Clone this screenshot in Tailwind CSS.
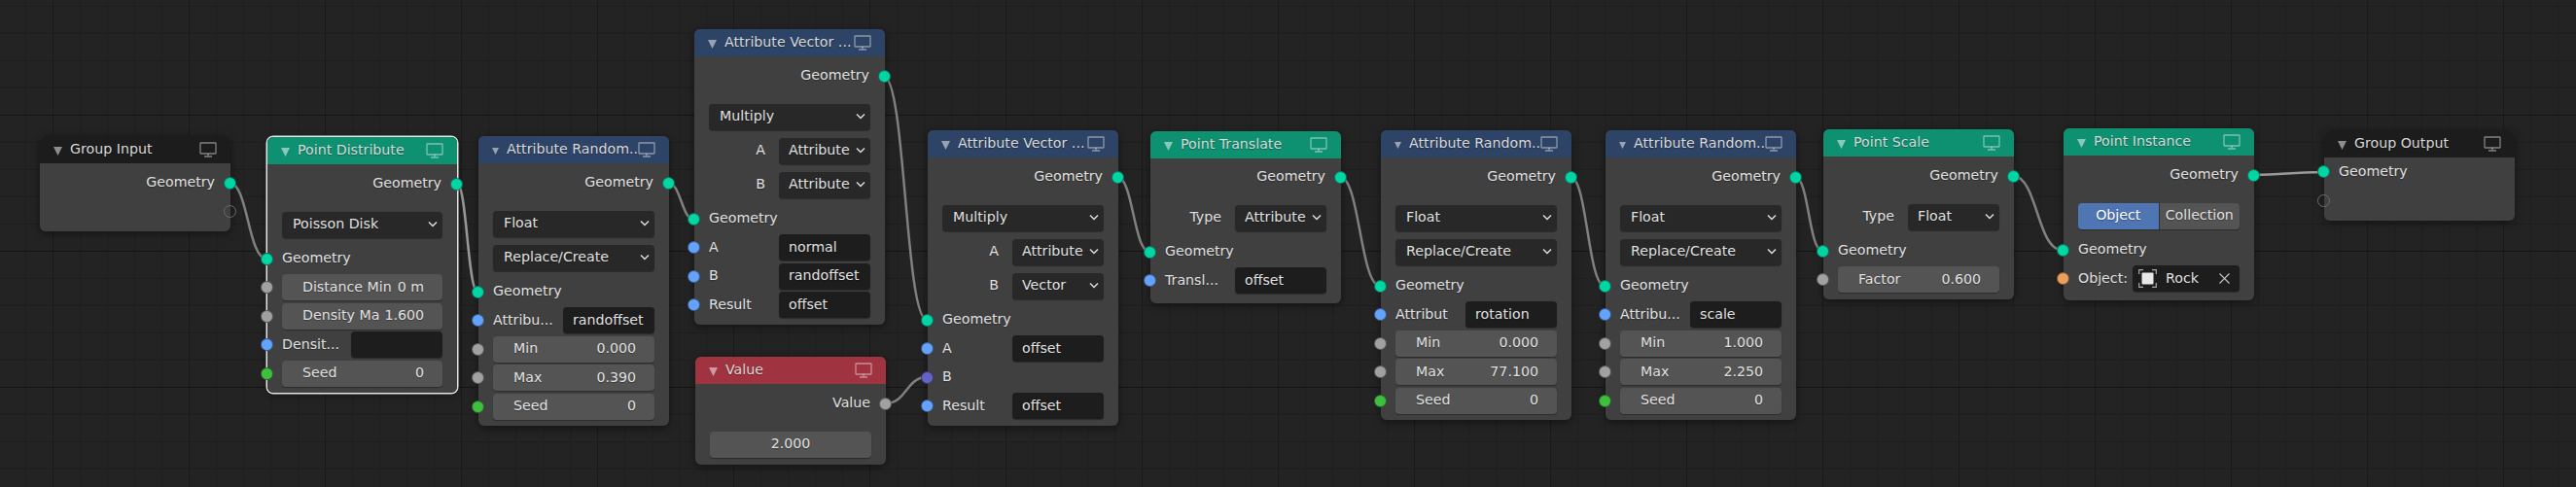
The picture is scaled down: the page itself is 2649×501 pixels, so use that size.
<!DOCTYPE html>
<html lang="en">
<head>
<meta charset="UTF-8">
<title>Geometry Nodes</title>
<script src="https://cdn.jsdelivr.net/npm/@tailwindcss/browser@4"></script>
</head>
<body class="bg-[#232323]">

<!-- Editor canvas with the two-level grid -->
<div class="relative h-[501px] w-[2649px] overflow-hidden bg-[#232323] bg-[linear-gradient(#151515_1px,transparent_1px),linear-gradient(90deg,#1a1a1a_1px,transparent_1px),linear-gradient(#1e1e1e_1px,transparent_1px),linear-gradient(90deg,#1e1e1e_1px,transparent_1px)] bg-[size:140px_140px,140px_140px,28px_28px,28px_28px] bg-[position:0_118px,54px_0,0_6px,26px_0] font-['DejaVu_Sans',sans-serif] text-[14.2px] text-[#e0e0e0] [text-shadow:0_1px_1px_#0005]">

  <!-- Wires -->
  <svg class="absolute inset-0" width="2649" height="501" fill="none" stroke="#808080" stroke-width="2.5">
    <path d="M236 188 C255 188 255 266 274 266"/>
    <path d="M470 189 C480 189 481 300 491 300" stroke="#999"/>
    <path d="M687 188 C700 188 701 226 714 226"/>
    <path d="M909 79 C931 79 931 329 953 329"/>
    <path d="M911 415 C932 415 932 388 953 388"/>
    <path d="M1149 182 C1165 182 1166 259 1182 259"/>
    <path d="M1378 182 C1398 182 1399 294 1419 294"/>
    <path d="M1615 182 C1632 182 1633 294 1650 294"/>
    <path d="M1846 182 C1860 182 1860 258 1874 258"/>
    <path d="M2070 181 C2095 181 2095 257 2120 257"/>
    <path d="M2316 180 C2352 180 2352 177 2389 177" stroke="#999"/>
  </svg>

  <!-- Group Input -->
  <div class="absolute left-[41px] top-[140px] w-[196px] rounded-[6px] bg-[#424242]/95 pb-[7px] shadow-[0_2px_8px_#0007]">
    <div class="flex h-[28px] items-center rounded-t-[6px] bg-[#1a1a1a]/95">
      <svg class="ml-[14px] mt-[3px] size-[9px] fill-white/50" viewBox="0 0 9 9"><polygon points="0,0 9,0 4.5,9"/></svg>
      <span class="ml-[8px] flex-1 whitespace-nowrap text-[#d8d8d8]">Group Input</span>
      <svg class="mr-[14px] h-[16px] w-[18px] shrink-0 stroke-white/45" viewBox="0 0 18 16" fill="none" stroke-width="1.3"><rect x="1" y="1" width="16" height="11" rx="0.5"/><path d="M9 12v3M5 15h8"/></svg>
    </div>
    <div class="mt-[6.5px] flex flex-col gap-[2.5px]">
      <div class="relative flex h-[27px] items-center justify-end px-[15px]"><span class="pr-[1px]">Geometry</span><i class="absolute -right-[5.5px] top-[7px] size-[13px] rounded-full border border-[#1a1a1a]/50 bg-[#00d6a3]"></i></div>
      <div class="relative h-[27px]"><i class="absolute -right-[5.5px] top-[7px] size-[13px] rounded-full border border-[#6a6a6a]"></i></div>
    </div>
  </div>

  <!-- Point Distribute (selected) -->
  <div class="absolute left-[275px] top-[141px] w-[195px] rounded-[6px] bg-[#424242]/95 shadow-[0_2px_8px_#0007] ring-[1.5px] ring-[#e4e4e4]">
    <div class="flex h-[28px] items-center rounded-t-[6px] bg-[#0e9170]">
      <svg class="ml-[14px] mt-[3px] size-[9px] fill-white/50" viewBox="0 0 9 9"><polygon points="0,0 9,0 4.5,9"/></svg>
      <span class="ml-[8px] flex-1 whitespace-nowrap text-[#d8d8d8]">Point Distribute</span>
      <svg class="mr-[14px] h-[16px] w-[18px] shrink-0 stroke-white/45" viewBox="0 0 18 16" fill="none" stroke-width="1.3"><rect x="1" y="1" width="16" height="11" rx="0.5"/><path d="M9 12v3M5 15h8"/></svg>
    </div>
    <div class="mt-[6.5px] flex flex-col gap-[2.5px] pb-[6.5px]">
      <div class="relative flex h-[27px] items-center justify-end px-[15px]"><span class="pr-[1px]">Geometry</span><i class="absolute -right-[5.5px] top-[7px] size-[13px] rounded-full border border-[#1a1a1a]/50 bg-[#00d6a3]"></i></div>
      <div class="relative mt-[12.5px] flex h-[27px] items-center px-[15px]"><div class="flex h-full flex-1 items-center justify-between rounded-[4px] bg-[#282828] pl-[11px] pr-[5px] shadow-[0_1px_1px_#0005]">Poisson Disk<svg class="h-[8px] w-[10px]" viewBox="0 0 10 8" fill="none" stroke="#ddd" stroke-width="1.5"><path d="M1 1.5l4 4 4-4"/></svg></div></div>
      <div class="relative mt-[5.5px] flex h-[27px] items-center px-[15px]">Geometry<i class="absolute -left-[7.5px] top-[7px] size-[13px] rounded-full border border-[#1a1a1a]/50 bg-[#00d6a3]"></i></div>
      <div class="relative flex h-[27px] items-center px-[15px]"><div class="flex h-full flex-1 items-center justify-between rounded-[4px] bg-[#545454] pl-[21px] pr-[19px] shadow-[0_1px_1px_#0005]"><span>Distance Min</span><span>0 m</span></div><i class="absolute -left-[7.5px] top-[7px] size-[13px] rounded-full border border-[#1a1a1a]/50 bg-[#a1a1a1]"></i></div>
      <div class="relative flex h-[27px] items-center px-[15px]"><div class="flex h-full flex-1 items-center justify-between rounded-[4px] bg-[#545454] pl-[21px] pr-[19px] shadow-[0_1px_1px_#0005]"><span>Density Ma</span><span>1.600</span></div><i class="absolute -left-[7.5px] top-[7px] size-[13px] rounded-full border border-[#1a1a1a]/50 bg-[#a1a1a1]"></i></div>
      <div class="relative flex h-[27px] items-center px-[15px]"><span class="flex-1">Densit...</span><div class="h-full w-[94px] rounded-[4px] bg-[#1d1d1d] shadow-[0_1px_1px_#0005]"></div><i class="absolute -left-[7.5px] top-[7px] size-[13px] rounded-full border border-[#1a1a1a]/50 bg-[#63a2ff]"></i></div>
      <div class="relative flex h-[27px] items-center px-[15px]"><div class="flex h-full flex-1 items-center justify-between rounded-[4px] bg-[#545454] pl-[21px] pr-[19px] shadow-[0_1px_1px_#0005]"><span>Seed</span><span>0</span></div><i class="absolute -left-[7.5px] top-[7px] size-[13px] rounded-full border border-[#1a1a1a]/50 bg-[#3fbf3f]"></i></div>
    </div>
  </div>

  <!-- Attribute Randomize: randoffset -->
  <div class="absolute left-[492px] top-[140px] w-[196px] rounded-[6px] bg-[#424242]/95 shadow-[0_2px_8px_#0007]">
    <div class="flex h-[28px] items-center rounded-t-[6px] bg-[#2e4467]">
      <svg class="ml-[14px] mt-[3px] size-[9px] fill-white/50" viewBox="0 0 9 9"><polygon points="0,0 9,0 4.5,9"/></svg>
      <span class="ml-[8px] flex-1 whitespace-nowrap text-[#d8d8d8]">Attribute Random..</span>
      <svg class="mr-[14px] h-[16px] w-[18px] shrink-0 stroke-white/45" viewBox="0 0 18 16" fill="none" stroke-width="1.3"><rect x="1" y="1" width="16" height="11" rx="0.5"/><path d="M9 12v3M5 15h8"/></svg>
    </div>
    <div class="mt-[6.5px] flex flex-col gap-[2.5px] pb-[6.5px]">
      <div class="relative flex h-[27px] items-center justify-end px-[15px]"><span class="pr-[1px]">Geometry</span><i class="absolute -right-[5.5px] top-[7px] size-[13px] rounded-full border border-[#1a1a1a]/50 bg-[#00d6a3]"></i></div>
      <div class="relative mt-[12.5px] flex h-[27px] items-center px-[15px]"><div class="flex h-full flex-1 items-center justify-between rounded-[4px] bg-[#282828] pl-[11px] pr-[5px] shadow-[0_1px_1px_#0005]">Float<svg class="h-[8px] w-[10px]" viewBox="0 0 10 8" fill="none" stroke="#ddd" stroke-width="1.5"><path d="M1 1.5l4 4 4-4"/></svg></div></div>
      <div class="relative mt-[5.5px] flex h-[27px] items-center px-[15px]"><div class="flex h-full flex-1 items-center justify-between rounded-[4px] bg-[#282828] pl-[11px] pr-[5px] shadow-[0_1px_1px_#0005]">Replace/Create<svg class="h-[8px] w-[10px]" viewBox="0 0 10 8" fill="none" stroke="#ddd" stroke-width="1.5"><path d="M1 1.5l4 4 4-4"/></svg></div></div>
      <div class="relative mt-[5.5px] flex h-[27px] items-center px-[15px]">Geometry<i class="absolute -left-[7.5px] top-[7px] size-[13px] rounded-full border border-[#1a1a1a]/50 bg-[#00d6a3]"></i></div>
      <div class="relative flex h-[27px] items-center px-[15px]"><span class="flex-1">Attribu...</span><div class="flex h-full w-[94px] items-center rounded-[4px] bg-[#1d1d1d] pl-[10px] shadow-[0_1px_1px_#0005]">randoffset</div><i class="absolute -left-[7.5px] top-[7px] size-[13px] rounded-full border border-[#1a1a1a]/50 bg-[#63a2ff]"></i></div>
      <div class="relative flex h-[27px] items-center px-[15px]"><div class="flex h-full flex-1 items-center justify-between rounded-[4px] bg-[#545454] pl-[21px] pr-[19px] shadow-[0_1px_1px_#0005]"><span>Min</span><span>0.000</span></div><i class="absolute -left-[7.5px] top-[7px] size-[13px] rounded-full border border-[#1a1a1a]/50 bg-[#a1a1a1]"></i></div>
      <div class="relative flex h-[27px] items-center px-[15px]"><div class="flex h-full flex-1 items-center justify-between rounded-[4px] bg-[#545454] pl-[21px] pr-[19px] shadow-[0_1px_1px_#0005]"><span>Max</span><span>0.390</span></div><i class="absolute -left-[7.5px] top-[7px] size-[13px] rounded-full border border-[#1a1a1a]/50 bg-[#a1a1a1]"></i></div>
      <div class="relative flex h-[27px] items-center px-[15px]"><div class="flex h-full flex-1 items-center justify-between rounded-[4px] bg-[#545454] pl-[21px] pr-[19px] shadow-[0_1px_1px_#0005]"><span>Seed</span><span>0</span></div><i class="absolute -left-[7.5px] top-[7px] size-[13px] rounded-full border border-[#1a1a1a]/50 bg-[#3fbf3f]"></i></div>
    </div>
  </div>

  <!-- Attribute Vector Math: normal x randoffset -->
  <div class="absolute left-[714px] top-[30px] w-[196px] rounded-[6px] bg-[#424242]/95 shadow-[0_2px_8px_#0007]">
    <div class="flex h-[28px] items-center rounded-t-[6px] bg-[#2e4467]">
      <svg class="ml-[14px] mt-[3px] size-[9px] fill-white/50" viewBox="0 0 9 9"><polygon points="0,0 9,0 4.5,9"/></svg>
      <span class="ml-[8px] flex-1 whitespace-nowrap text-[#d8d8d8]">Attribute Vector ...</span>
      <svg class="mr-[14px] h-[16px] w-[18px] shrink-0 stroke-white/45" viewBox="0 0 18 16" fill="none" stroke-width="1.3"><rect x="1" y="1" width="16" height="11" rx="0.5"/><path d="M9 12v3M5 15h8"/></svg>
    </div>
    <div class="mt-[6.5px] flex flex-col gap-[2.5px] pb-[6.5px]">
      <div class="relative flex h-[27px] items-center justify-end px-[15px]"><span class="pr-[1px]">Geometry</span><i class="absolute -right-[5.5px] top-[7px] size-[13px] rounded-full border border-[#1a1a1a]/50 bg-[#00d6a3]"></i></div>
      <div class="relative mt-[12.5px] flex h-[27px] items-center px-[15px]"><div class="flex h-full flex-1 items-center justify-between rounded-[4px] bg-[#282828] pl-[11px] pr-[5px] shadow-[0_1px_1px_#0005]">Multiply<svg class="h-[8px] w-[10px]" viewBox="0 0 10 8" fill="none" stroke="#ddd" stroke-width="1.5"><path d="M1 1.5l4 4 4-4"/></svg></div></div>
      <div class="relative mt-[5.5px] flex h-[27px] items-center px-[15px]"><span class="flex-1 pr-[14px] text-right">A</span><div class="flex h-full w-[94px] items-center justify-between rounded-[4px] bg-[#282828] pl-[10px] pr-[5px] shadow-[0_1px_1px_#0005]">Attribute<svg class="h-[8px] w-[10px]" viewBox="0 0 10 8" fill="none" stroke="#ddd" stroke-width="1.5"><path d="M1 1.5l4 4 4-4"/></svg></div></div>
      <div class="relative mt-[5.5px] flex h-[27px] items-center px-[15px]"><span class="flex-1 pr-[14px] text-right">B</span><div class="flex h-full w-[94px] items-center justify-between rounded-[4px] bg-[#282828] pl-[10px] pr-[5px] shadow-[0_1px_1px_#0005]">Attribute<svg class="h-[8px] w-[10px]" viewBox="0 0 10 8" fill="none" stroke="#ddd" stroke-width="1.5"><path d="M1 1.5l4 4 4-4"/></svg></div></div>
      <div class="relative mt-[5.5px] flex h-[27px] items-center px-[15px]">Geometry<i class="absolute -left-[7.5px] top-[7px] size-[13px] rounded-full border border-[#1a1a1a]/50 bg-[#00d6a3]"></i></div>
      <div class="relative flex h-[27px] items-center px-[15px]"><span class="flex-1">A</span><div class="flex h-full w-[94px] items-center rounded-[4px] bg-[#1d1d1d] pl-[10px] shadow-[0_1px_1px_#0005]">normal</div><i class="absolute -left-[7.5px] top-[7px] size-[13px] rounded-full border border-[#1a1a1a]/50 bg-[#63a2ff]"></i></div>
      <div class="relative flex h-[27px] items-center px-[15px]"><span class="flex-1">B</span><div class="flex h-full w-[94px] items-center rounded-[4px] bg-[#1d1d1d] pl-[10px] shadow-[0_1px_1px_#0005]">randoffset</div><i class="absolute -left-[7.5px] top-[7px] size-[13px] rounded-full border border-[#1a1a1a]/50 bg-[#63a2ff]"></i></div>
      <div class="relative flex h-[27px] items-center px-[15px]"><span class="flex-1">Result</span><div class="flex h-full w-[94px] items-center rounded-[4px] bg-[#1d1d1d] pl-[10px] shadow-[0_1px_1px_#0005]">offset</div><i class="absolute -left-[7.5px] top-[7px] size-[13px] rounded-full border border-[#1a1a1a]/50 bg-[#63a2ff]"></i></div>
    </div>
  </div>

  <!-- Value -->
  <div class="absolute left-[715px] top-[367px] w-[196px] rounded-[6px] bg-[#424242]/95 shadow-[0_2px_8px_#0007]">
    <div class="flex h-[28px] items-center rounded-t-[6px] bg-[#9f3340]">
      <svg class="ml-[14px] mt-[3px] size-[9px] fill-white/50" viewBox="0 0 9 9"><polygon points="0,0 9,0 4.5,9"/></svg>
      <span class="ml-[8px] flex-1 whitespace-nowrap text-[#d8d8d8]">Value</span>
      <svg class="mr-[14px] h-[16px] w-[18px] shrink-0 stroke-white/45" viewBox="0 0 18 16" fill="none" stroke-width="1.3"><rect x="1" y="1" width="16" height="11" rx="0.5"/><path d="M9 12v3M5 15h8"/></svg>
    </div>
    <div class="mt-[6.5px] flex flex-col gap-[2.5px] pb-[7.5px]">
      <div class="relative flex h-[27px] items-center justify-end px-[15px]"><span class="pr-[1px]">Value</span><i class="absolute -right-[5.5px] top-[7px] size-[13px] rounded-full border border-[#1a1a1a]/50 bg-[#a1a1a1]"></i></div>
      <div class="relative mt-[12.5px] flex h-[27px] items-center px-[15px]"><div class="flex h-full flex-1 items-center justify-center rounded-[4px] bg-[#545454] shadow-[0_1px_1px_#0005]">2.000</div></div>
    </div>
  </div>

  <!-- Attribute Vector Math: offset x value -->
  <div class="absolute left-[954px] top-[134px] w-[196px] rounded-[6px] bg-[#424242]/95 shadow-[0_2px_8px_#0007]">
    <div class="flex h-[28px] items-center rounded-t-[6px] bg-[#2e4467]">
      <svg class="ml-[14px] mt-[3px] size-[9px] fill-white/50" viewBox="0 0 9 9"><polygon points="0,0 9,0 4.5,9"/></svg>
      <span class="ml-[8px] flex-1 whitespace-nowrap text-[#d8d8d8]">Attribute Vector ...</span>
      <svg class="mr-[14px] h-[16px] w-[18px] shrink-0 stroke-white/45" viewBox="0 0 18 16" fill="none" stroke-width="1.3"><rect x="1" y="1" width="16" height="11" rx="0.5"/><path d="M9 12v3M5 15h8"/></svg>
    </div>
    <div class="mt-[6.5px] flex flex-col gap-[2.5px] pb-[6.5px]">
      <div class="relative flex h-[27px] items-center justify-end px-[15px]"><span class="pr-[1px]">Geometry</span><i class="absolute -right-[5.5px] top-[7px] size-[13px] rounded-full border border-[#1a1a1a]/50 bg-[#00d6a3]"></i></div>
      <div class="relative mt-[12.5px] flex h-[27px] items-center px-[15px]"><div class="flex h-full flex-1 items-center justify-between rounded-[4px] bg-[#282828] pl-[11px] pr-[5px] shadow-[0_1px_1px_#0005]">Multiply<svg class="h-[8px] w-[10px]" viewBox="0 0 10 8" fill="none" stroke="#ddd" stroke-width="1.5"><path d="M1 1.5l4 4 4-4"/></svg></div></div>
      <div class="relative mt-[5.5px] flex h-[27px] items-center px-[15px]"><span class="flex-1 pr-[14px] text-right">A</span><div class="flex h-full w-[94px] items-center justify-between rounded-[4px] bg-[#282828] pl-[10px] pr-[5px] shadow-[0_1px_1px_#0005]">Attribute<svg class="h-[8px] w-[10px]" viewBox="0 0 10 8" fill="none" stroke="#ddd" stroke-width="1.5"><path d="M1 1.5l4 4 4-4"/></svg></div></div>
      <div class="relative mt-[5.5px] flex h-[27px] items-center px-[15px]"><span class="flex-1 pr-[14px] text-right">B</span><div class="flex h-full w-[94px] items-center justify-between rounded-[4px] bg-[#282828] pl-[10px] pr-[5px] shadow-[0_1px_1px_#0005]">Vector<svg class="h-[8px] w-[10px]" viewBox="0 0 10 8" fill="none" stroke="#ddd" stroke-width="1.5"><path d="M1 1.5l4 4 4-4"/></svg></div></div>
      <div class="relative mt-[5.5px] flex h-[27px] items-center px-[15px]">Geometry<i class="absolute -left-[7.5px] top-[7px] size-[13px] rounded-full border border-[#1a1a1a]/50 bg-[#00d6a3]"></i></div>
      <div class="relative flex h-[27px] items-center px-[15px]"><span class="flex-1">A</span><div class="flex h-full w-[94px] items-center rounded-[4px] bg-[#1d1d1d] pl-[10px] shadow-[0_1px_1px_#0005]">offset</div><i class="absolute -left-[7.5px] top-[7px] size-[13px] rounded-full border border-[#1a1a1a]/50 bg-[#63a2ff]"></i></div>
      <div class="relative flex h-[27px] items-center px-[15px]">B<i class="absolute -left-[7.5px] top-[7px] size-[13px] rounded-full border border-[#1a1a1a]/50 bg-[#6363c7]"></i></div>
      <div class="relative flex h-[27px] items-center px-[15px]"><span class="flex-1">Result</span><div class="flex h-full w-[94px] items-center rounded-[4px] bg-[#1d1d1d] pl-[10px] shadow-[0_1px_1px_#0005]">offset</div><i class="absolute -left-[7.5px] top-[7px] size-[13px] rounded-full border border-[#1a1a1a]/50 bg-[#63a2ff]"></i></div>
    </div>
  </div>

  <!-- Point Translate -->
  <div class="absolute left-[1183px] top-[135px] w-[196px] rounded-[6px] bg-[#424242]/95 shadow-[0_2px_8px_#0007]">
    <div class="flex h-[28px] items-center rounded-t-[6px] bg-[#0e9170]">
      <svg class="ml-[14px] mt-[3px] size-[9px] fill-white/50" viewBox="0 0 9 9"><polygon points="0,0 9,0 4.5,9"/></svg>
      <span class="ml-[8px] flex-1 whitespace-nowrap text-[#d8d8d8]">Point Translate</span>
      <svg class="mr-[14px] h-[16px] w-[18px] shrink-0 stroke-white/45" viewBox="0 0 18 16" fill="none" stroke-width="1.3"><rect x="1" y="1" width="16" height="11" rx="0.5"/><path d="M9 12v3M5 15h8"/></svg>
    </div>
    <div class="mt-[5.5px] flex flex-col gap-[2.5px] pb-[10px]">
      <div class="relative flex h-[27px] items-center justify-end px-[15px]"><span class="pr-[1px]">Geometry</span><i class="absolute -right-[5.5px] top-[7px] size-[13px] rounded-full border border-[#1a1a1a]/50 bg-[#00d6a3]"></i></div>
      <div class="relative mt-[12.5px] flex h-[27px] items-center px-[15px]"><span class="flex-1 pr-[14px] text-right">Type</span><div class="flex h-full w-[94px] items-center justify-between rounded-[4px] bg-[#282828] pl-[10px] pr-[5px] shadow-[0_1px_1px_#0005]">Attribute<svg class="h-[8px] w-[10px]" viewBox="0 0 10 8" fill="none" stroke="#ddd" stroke-width="1.5"><path d="M1 1.5l4 4 4-4"/></svg></div></div>
      <div class="relative mt-[5.5px] flex h-[27px] items-center px-[15px]">Geometry<i class="absolute -left-[7.5px] top-[7px] size-[13px] rounded-full border border-[#1a1a1a]/50 bg-[#00d6a3]"></i></div>
      <div class="relative flex h-[27px] items-center px-[15px]"><span class="flex-1">Transl...</span><div class="flex h-full w-[94px] items-center rounded-[4px] bg-[#1d1d1d] pl-[10px] shadow-[0_1px_1px_#0005]">offset</div><i class="absolute -left-[7.5px] top-[7px] size-[13px] rounded-full border border-[#1a1a1a]/50 bg-[#63a2ff]"></i></div>
    </div>
  </div>

  <!-- Attribute Randomize: rotation -->
  <div class="absolute left-[1420px] top-[134px] w-[196px] rounded-[6px] bg-[#424242]/95 shadow-[0_2px_8px_#0007]">
    <div class="flex h-[28px] items-center rounded-t-[6px] bg-[#2e4467]">
      <svg class="ml-[14px] mt-[3px] size-[9px] fill-white/50" viewBox="0 0 9 9"><polygon points="0,0 9,0 4.5,9"/></svg>
      <span class="ml-[8px] flex-1 whitespace-nowrap text-[#d8d8d8]">Attribute Random..</span>
      <svg class="mr-[14px] h-[16px] w-[18px] shrink-0 stroke-white/45" viewBox="0 0 18 16" fill="none" stroke-width="1.3"><rect x="1" y="1" width="16" height="11" rx="0.5"/><path d="M9 12v3M5 15h8"/></svg>
    </div>
    <div class="mt-[6.5px] flex flex-col gap-[2.5px] pb-[6.5px]">
      <div class="relative flex h-[27px] items-center justify-end px-[15px]"><span class="pr-[1px]">Geometry</span><i class="absolute -right-[5.5px] top-[7px] size-[13px] rounded-full border border-[#1a1a1a]/50 bg-[#00d6a3]"></i></div>
      <div class="relative mt-[12.5px] flex h-[27px] items-center px-[15px]"><div class="flex h-full flex-1 items-center justify-between rounded-[4px] bg-[#282828] pl-[11px] pr-[5px] shadow-[0_1px_1px_#0005]">Float<svg class="h-[8px] w-[10px]" viewBox="0 0 10 8" fill="none" stroke="#ddd" stroke-width="1.5"><path d="M1 1.5l4 4 4-4"/></svg></div></div>
      <div class="relative mt-[5.5px] flex h-[27px] items-center px-[15px]"><div class="flex h-full flex-1 items-center justify-between rounded-[4px] bg-[#282828] pl-[11px] pr-[5px] shadow-[0_1px_1px_#0005]">Replace/Create<svg class="h-[8px] w-[10px]" viewBox="0 0 10 8" fill="none" stroke="#ddd" stroke-width="1.5"><path d="M1 1.5l4 4 4-4"/></svg></div></div>
      <div class="relative mt-[5.5px] flex h-[27px] items-center px-[15px]">Geometry<i class="absolute -left-[7.5px] top-[7px] size-[13px] rounded-full border border-[#1a1a1a]/50 bg-[#00d6a3]"></i></div>
      <div class="relative flex h-[27px] items-center px-[15px]"><span class="flex-1">Attribut</span><div class="flex h-full w-[94px] items-center rounded-[4px] bg-[#1d1d1d] pl-[10px] shadow-[0_1px_1px_#0005]">rotation</div><i class="absolute -left-[7.5px] top-[7px] size-[13px] rounded-full border border-[#1a1a1a]/50 bg-[#63a2ff]"></i></div>
      <div class="relative flex h-[27px] items-center px-[15px]"><div class="flex h-full flex-1 items-center justify-between rounded-[4px] bg-[#545454] pl-[21px] pr-[19px] shadow-[0_1px_1px_#0005]"><span>Min</span><span>0.000</span></div><i class="absolute -left-[7.5px] top-[7px] size-[13px] rounded-full border border-[#1a1a1a]/50 bg-[#a1a1a1]"></i></div>
      <div class="relative flex h-[27px] items-center px-[15px]"><div class="flex h-full flex-1 items-center justify-between rounded-[4px] bg-[#545454] pl-[21px] pr-[19px] shadow-[0_1px_1px_#0005]"><span>Max</span><span>77.100</span></div><i class="absolute -left-[7.5px] top-[7px] size-[13px] rounded-full border border-[#1a1a1a]/50 bg-[#a1a1a1]"></i></div>
      <div class="relative flex h-[27px] items-center px-[15px]"><div class="flex h-full flex-1 items-center justify-between rounded-[4px] bg-[#545454] pl-[21px] pr-[19px] shadow-[0_1px_1px_#0005]"><span>Seed</span><span>0</span></div><i class="absolute -left-[7.5px] top-[7px] size-[13px] rounded-full border border-[#1a1a1a]/50 bg-[#3fbf3f]"></i></div>
    </div>
  </div>

  <!-- Attribute Randomize: scale -->
  <div class="absolute left-[1651px] top-[134px] w-[196px] rounded-[6px] bg-[#424242]/95 shadow-[0_2px_8px_#0007]">
    <div class="flex h-[28px] items-center rounded-t-[6px] bg-[#2e4467]">
      <svg class="ml-[14px] mt-[3px] size-[9px] fill-white/50" viewBox="0 0 9 9"><polygon points="0,0 9,0 4.5,9"/></svg>
      <span class="ml-[8px] flex-1 whitespace-nowrap text-[#d8d8d8]">Attribute Random..</span>
      <svg class="mr-[14px] h-[16px] w-[18px] shrink-0 stroke-white/45" viewBox="0 0 18 16" fill="none" stroke-width="1.3"><rect x="1" y="1" width="16" height="11" rx="0.5"/><path d="M9 12v3M5 15h8"/></svg>
    </div>
    <div class="mt-[6.5px] flex flex-col gap-[2.5px] pb-[6.5px]">
      <div class="relative flex h-[27px] items-center justify-end px-[15px]"><span class="pr-[1px]">Geometry</span><i class="absolute -right-[5.5px] top-[7px] size-[13px] rounded-full border border-[#1a1a1a]/50 bg-[#00d6a3]"></i></div>
      <div class="relative mt-[12.5px] flex h-[27px] items-center px-[15px]"><div class="flex h-full flex-1 items-center justify-between rounded-[4px] bg-[#282828] pl-[11px] pr-[5px] shadow-[0_1px_1px_#0005]">Float<svg class="h-[8px] w-[10px]" viewBox="0 0 10 8" fill="none" stroke="#ddd" stroke-width="1.5"><path d="M1 1.5l4 4 4-4"/></svg></div></div>
      <div class="relative mt-[5.5px] flex h-[27px] items-center px-[15px]"><div class="flex h-full flex-1 items-center justify-between rounded-[4px] bg-[#282828] pl-[11px] pr-[5px] shadow-[0_1px_1px_#0005]">Replace/Create<svg class="h-[8px] w-[10px]" viewBox="0 0 10 8" fill="none" stroke="#ddd" stroke-width="1.5"><path d="M1 1.5l4 4 4-4"/></svg></div></div>
      <div class="relative mt-[5.5px] flex h-[27px] items-center px-[15px]">Geometry<i class="absolute -left-[7.5px] top-[7px] size-[13px] rounded-full border border-[#1a1a1a]/50 bg-[#00d6a3]"></i></div>
      <div class="relative flex h-[27px] items-center px-[15px]"><span class="flex-1">Attribu...</span><div class="flex h-full w-[94px] items-center rounded-[4px] bg-[#1d1d1d] pl-[10px] shadow-[0_1px_1px_#0005]">scale</div><i class="absolute -left-[7.5px] top-[7px] size-[13px] rounded-full border border-[#1a1a1a]/50 bg-[#63a2ff]"></i></div>
      <div class="relative flex h-[27px] items-center px-[15px]"><div class="flex h-full flex-1 items-center justify-between rounded-[4px] bg-[#545454] pl-[21px] pr-[19px] shadow-[0_1px_1px_#0005]"><span>Min</span><span>1.000</span></div><i class="absolute -left-[7.5px] top-[7px] size-[13px] rounded-full border border-[#1a1a1a]/50 bg-[#a1a1a1]"></i></div>
      <div class="relative flex h-[27px] items-center px-[15px]"><div class="flex h-full flex-1 items-center justify-between rounded-[4px] bg-[#545454] pl-[21px] pr-[19px] shadow-[0_1px_1px_#0005]"><span>Max</span><span>2.250</span></div><i class="absolute -left-[7.5px] top-[7px] size-[13px] rounded-full border border-[#1a1a1a]/50 bg-[#a1a1a1]"></i></div>
      <div class="relative flex h-[27px] items-center px-[15px]"><div class="flex h-full flex-1 items-center justify-between rounded-[4px] bg-[#545454] pl-[21px] pr-[19px] shadow-[0_1px_1px_#0005]"><span>Seed</span><span>0</span></div><i class="absolute -left-[7.5px] top-[7px] size-[13px] rounded-full border border-[#1a1a1a]/50 bg-[#3fbf3f]"></i></div>
    </div>
  </div>

  <!-- Point Scale -->
  <div class="absolute left-[1875px] top-[133px] w-[196px] rounded-[6px] bg-[#424242]/95 shadow-[0_2px_8px_#0007]">
    <div class="flex h-[28px] items-center rounded-t-[6px] bg-[#0e9170]">
      <svg class="ml-[14px] mt-[3px] size-[9px] fill-white/50" viewBox="0 0 9 9"><polygon points="0,0 9,0 4.5,9"/></svg>
      <span class="ml-[8px] flex-1 whitespace-nowrap text-[#d8d8d8]">Point Scale</span>
      <svg class="mr-[14px] h-[16px] w-[18px] shrink-0 stroke-white/45" viewBox="0 0 18 16" fill="none" stroke-width="1.3"><rect x="1" y="1" width="16" height="11" rx="0.5"/><path d="M9 12v3M5 15h8"/></svg>
    </div>
    <div class="mt-[6.5px] flex flex-col gap-[2.5px] pb-[7px]">
      <div class="relative flex h-[27px] items-center justify-end px-[15px]"><span class="pr-[1px]">Geometry</span><i class="absolute -right-[5.5px] top-[7px] size-[13px] rounded-full border border-[#1a1a1a]/50 bg-[#00d6a3]"></i></div>
      <div class="relative mt-[12.5px] flex h-[27px] items-center px-[15px]"><span class="flex-1 pr-[14px] text-right">Type</span><div class="flex h-full w-[94px] items-center justify-between rounded-[4px] bg-[#282828] pl-[10px] pr-[5px] shadow-[0_1px_1px_#0005]">Float<svg class="h-[8px] w-[10px]" viewBox="0 0 10 8" fill="none" stroke="#ddd" stroke-width="1.5"><path d="M1 1.5l4 4 4-4"/></svg></div></div>
      <div class="relative mt-[5.5px] flex h-[27px] items-center px-[15px]">Geometry<i class="absolute -left-[7.5px] top-[7px] size-[13px] rounded-full border border-[#1a1a1a]/50 bg-[#00d6a3]"></i></div>
      <div class="relative flex h-[27px] items-center px-[15px]"><div class="flex h-full flex-1 items-center justify-between rounded-[4px] bg-[#545454] pl-[21px] pr-[19px] shadow-[0_1px_1px_#0005]"><span>Factor</span><span>0.600</span></div><i class="absolute -left-[7.5px] top-[7px] size-[13px] rounded-full border border-[#1a1a1a]/50 bg-[#a1a1a1]"></i></div>
    </div>
  </div>

  <!-- Point Instance -->
  <div class="absolute left-[2122px] top-[132px] w-[196px] rounded-[6px] bg-[#424242]/95 shadow-[0_2px_8px_#0007]">
    <div class="flex h-[28px] items-center rounded-t-[6px] bg-[#0e9170]">
      <svg class="ml-[14px] mt-[3px] size-[9px] fill-white/50" viewBox="0 0 9 9"><polygon points="0,0 9,0 4.5,9"/></svg>
      <span class="ml-[8px] flex-1 whitespace-nowrap text-[#d8d8d8]">Point Instance</span>
      <svg class="mr-[14px] h-[16px] w-[18px] shrink-0 stroke-white/45" viewBox="0 0 18 16" fill="none" stroke-width="1.3"><rect x="1" y="1" width="16" height="11" rx="0.5"/><path d="M9 12v3M5 15h8"/></svg>
    </div>
    <div class="mt-[6.5px] flex flex-col gap-[2.5px] pb-[9px]">
      <div class="relative flex h-[27px] items-center justify-end px-[15px]"><span class="pr-[1px]">Geometry</span><i class="absolute -right-[5.5px] top-[7px] size-[13px] rounded-full border border-[#1a1a1a]/50 bg-[#00d6a3]"></i></div>
      <div class="relative mt-[12.5px] flex h-[27px] items-center px-[15px]">
        <div class="flex h-full flex-1 items-center justify-center rounded-l-[4px] border-r border-[#333] bg-[#4f76b3] text-white shadow-[0_1px_1px_#0005]">Object</div>
        <div class="flex h-full flex-1 items-center justify-center rounded-r-[4px] bg-[#545454] shadow-[0_1px_1px_#0005]">Collection</div>
      </div>
      <div class="relative mt-[5.5px] flex h-[27px] items-center px-[15px]">Geometry<i class="absolute -left-[7.5px] top-[7px] size-[13px] rounded-full border border-[#1a1a1a]/50 bg-[#00d6a3]"></i></div>
      <div class="relative flex h-[27px] items-center px-[15px]">
        <span class="flex-1">Object:</span>
        <div class="flex h-full w-[110px] items-center rounded-[4px] bg-[#1d1d1d] pl-[6px] pr-[10px] shadow-[0_1px_1px_#0005]">
          <svg class="size-[19px] shrink-0" viewBox="0 0 19 19" fill="none"><path d="M0.7 5V0.7H5M14 0.7H18.3V5M18.3 14V18.3H14M5 18.3H0.7V14" stroke="#a8a8a8" stroke-width="1.2"/><rect x="3.5" y="3.5" width="12" height="12" rx="1" fill="#e8e8e8"/></svg>
          <span class="ml-[9px] flex-1">Rock</span>
          <svg class="size-[11px] shrink-0" viewBox="0 0 11 11" fill="none" stroke="#c8c8c8" stroke-width="1.2"><path d="M0.5 0.5l10 10M10.5 0.5l-10 10"/></svg>
        </div>
        <i class="absolute -left-[7.5px] top-[7px] size-[13px] rounded-full border border-[#1a1a1a]/50 bg-[#ed9e5c]"></i>
      </div>
    </div>
  </div>

  <!-- Group Output -->
  <div class="absolute left-[2390px] top-[134px] w-[196px] rounded-[6px] bg-[#424242]/95 pb-[7.5px] shadow-[0_2px_8px_#0007]">
    <div class="flex h-[28px] items-center rounded-t-[6px] bg-[#1a1a1a]/95">
      <svg class="ml-[14px] mt-[3px] size-[9px] fill-white/50" viewBox="0 0 9 9"><polygon points="0,0 9,0 4.5,9"/></svg>
      <span class="ml-[8px] flex-1 whitespace-nowrap text-[#d8d8d8]">Group Output</span>
      <svg class="mr-[14px] h-[16px] w-[18px] shrink-0 stroke-white/45" viewBox="0 0 18 16" fill="none" stroke-width="1.3"><rect x="1" y="1" width="16" height="11" rx="0.5"/><path d="M9 12v3M5 15h8"/></svg>
    </div>
    <div class="mt-[1px] flex flex-col gap-[2.5px]">
      <div class="relative flex h-[27px] items-center px-[15px]">Geometry<i class="absolute -left-[7.5px] top-[7px] size-[13px] rounded-full border border-[#1a1a1a]/50 bg-[#00d6a3]"></i></div>
      <div class="relative h-[27px]"><i class="absolute -left-[7.5px] top-[7px] size-[13px] rounded-full border border-[#6a6a6a]"></i></div>
    </div>
  </div>

</div>
</body>
</html>
